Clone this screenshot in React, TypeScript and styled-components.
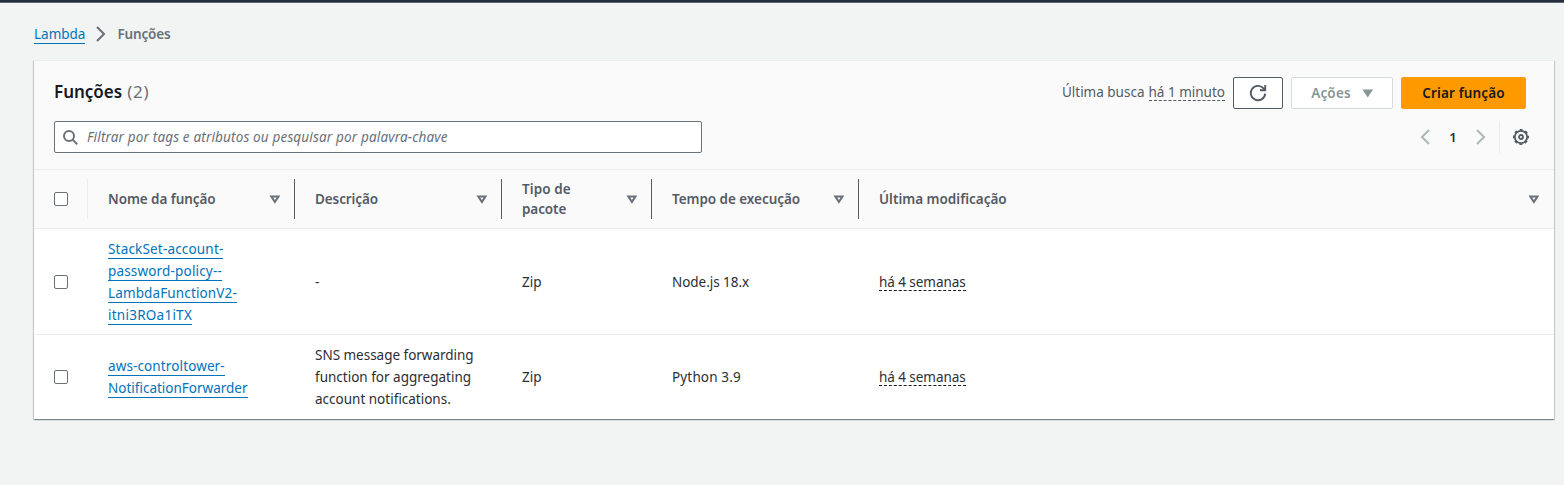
import React from "react";
import styled, { createGlobalStyle, css } from "styled-components";

const Global = createGlobalStyle`
  * { box-sizing: border-box; }
  body {
    margin: 0;
    background: #f2f3f3;
    color: #2b2e34;
    font: 13.5px/22px "Noto Sans", "Open Sans", sans-serif;
  }
  #root { min-height: 485px; }
`;

const TopBar = styled.div`
  height: 3px;
  background: #232f3e;
  border-bottom: 1px solid #5d6674;
`;

const Breadcrumbs = styled.nav`
  display: flex;
  align-items: center;
  height: 57px;
  padding: 5px 0 0 34px;
  svg { margin: 0 8px; }
`;

/* A run of text with its own tracking. */
const Text = styled.span<{ $track?: number }>`
  letter-spacing: ${(p) => p.$track ?? 0}px;
  white-space: nowrap;
`;

const Current = styled(Text)`
  color: #687078;
  font-weight: 600;
`;

const Link = styled.a<{ $track?: number }>`
  color: #0073bb;
  letter-spacing: ${(p) => p.$track ?? 0}px;
  white-space: nowrap;
  line-height: 19px;
  height: 19px;
  border-bottom: 1px solid #0073bb;
`;

const Panel = styled.main`
  margin: 0 10px 0 34px;
  background: #fff;
  border-top: 1px solid #eaeded;
  box-shadow: 0 1px 1px 0 rgba(0, 28, 36, 0.3), 1px 1px 1px 0 rgba(0, 28, 36, 0.15),
    -1px 1px 1px 0 rgba(0, 28, 36, 0.15);
`;

const PanelHeader = styled.header`
  height: 108px;
  padding: 16px 20px 0;
  background: #fafafa;
`;

const Line = styled.div`
  display: flex;
  align-items: center;
  justify-content: space-between;
  height: 32px;
  & + & { margin-top: 12px; }
`;

const Title = styled.h2`
  margin: 0;
  font-size: 17px;
  font-weight: 600;
  line-height: 22px;
  padding-bottom: 2px;
  color: #16191f;
`;

const Counter = styled.span`
  margin-left: 5px;
  color: #687078;
  font-weight: 400;
  letter-spacing: 0.7px;
`;

const Actions = styled.div`
  display: flex;
  align-items: center;
  gap: 8px;
  margin-right: 8px;
`;

const LastFetch = styled.div`
  display: flex;
  align-items: baseline;
  padding-bottom: 2px;
  color: #545b64;
  gap: 4px;
`;

const Relative = styled.span<{ $track?: number; $line?: string }>`
  display: inline-block;
  height: 19px;
  margin-bottom: 1px;
  line-height: 20px;
  white-space: nowrap;
  letter-spacing: ${(p) => p.$track ?? 0}px;
  border-bottom: 1px dashed ${(p) => p.$line ?? "#16191f"};
`;

const variants = {
  normal: css`background: #fff; border-color: #545b64; color: #545b64;`,
  disabled: css`background: #fff; border-color: #d5dbdb; color: #879596;`,
  primary: css`background: #ff9900; border-color: #ff9900; color: #16191f;`,
};

const Button = styled.button<{ $variant: keyof typeof variants; $width: number }>`
  display: flex;
  align-items: center;
  justify-content: center;
  gap: 11px;
  width: ${(p) => p.$width}px;
  height: 32px;
  padding: 0;
  border: 1px solid;
  border-radius: 2px;
  font: inherit;
  font-weight: 600;
  ${(p) => variants[p.$variant]}
`;

const Search = styled.label`
  display: flex;
  align-items: center;
  gap: 9px;
  width: 648px;
  height: 32px;
  padding-left: 8px;
  background: #fff;
  border: 1px solid #687078;
  border-radius: 2px;
  color: #687078;
  font-style: italic;
`;

const Pager = styled.div`
  display: flex;
  align-items: center;
  margin-right: 5px;
`;

const PageNumber = styled.span`
  width: 40px;
  text-align: center;
  font-weight: 600;
  font-size: 13px;
`;

const Settings = styled.div`
  display: flex;
  align-items: center;
  height: 32px;
  margin-left: 10px;
  padding: 0 0 0 13px;
  border-left: 1px solid #eaeded;
`;

const Row = styled.div<{ $height: number; $head?: boolean }>`
  display: grid;
  grid-template-columns: 54px 207px 207px 150px 207px 1fr;
  align-items: center;
  height: ${(p) => p.$height}px;
  border-top: 1px solid #eaeded;
  background: ${(p) => (p.$head ? "#fafafa" : "#fff")};
`;

const Cell = styled.div`
  display: flex;
  flex-direction: column;
  align-items: flex-start;
  padding-left: 20px;
`;

const Lines = styled(Cell)`
  align-self: start;
  gap: 3px;
  padding-top: 11px;
  ${Row}:last-child & { padding-top: 22px; }
`;

const HeadCell = styled.div<{ $divider?: string }>`
  display: flex;
  align-items: center;
  justify-content: space-between;
  height: 40px;
  padding: 0 14px 0 20px;
  border-right: 1px solid ${(p) => p.$divider ?? "#545b64"};
  color: #545b64;
  font-weight: 600;
  line-height: 20px;
  &:last-child { border-right: 0; padding-right: 15px; }
`;

const Box = styled.span`
  width: 14px;
  height: 14px;
  background: #fff;
  border: 1px solid #687078;
  border-radius: 2px;
`;

const Chevron = ({ flip, color }: { flip?: boolean; color: string }) => (
  <svg width="16" height="16" viewBox="0 0 16 16" fill="none" stroke={color} strokeWidth="2">
    <path d={flip ? "M12 1 5 8l7 7" : "M4 1l7 7-7 7"} />
  </svg>
);

const SortIcon = () => (
  <svg width="11" height="9" viewBox="0 0 11 9" fill="none" stroke="#687078" strokeWidth="2">
    <path d="M2.3 1.5h7.2L5.9 6.9z" />
  </svg>
);

const SearchIcon = () => (
  <svg width="15" height="15" viewBox="0 0 15 15" fill="none" stroke="#687078" strokeWidth="2">
    <circle cx="6" cy="6" r="5" />
    <path d="M9.6 9.6l4.6 4.6" />
  </svg>
);

const RefreshIcon = () => (
  <svg width="18" height="18" viewBox="0 0 18 18" fill="none" stroke="#545b64" strokeWidth="1.9">
    <path d="M16.2 9.6a7.2 7.2 0 1 1-1.7-5.2l1.3 1.4" />
    <path d="M16.2 1v5.2h-5.2" />
  </svg>
);

const GearIcon = () => (
  <svg width="16" height="16" viewBox="0 0 16 16" fill="none" stroke="#545b64">
    <circle cx="8" cy="8" r="6.2" strokeWidth="1.8" />
    <circle cx="8" cy="8" r="7.2" strokeWidth="1.6" strokeDasharray="3 2.655" strokeDashoffset="1.5" />
    <circle cx="8" cy="8" r="2" strokeWidth="1.8" />
  </svg>
);

const columns: [string, number][][] = [
  [["Nome da função", -0.07]],
  [["Descrição", -0.1]],
  [["Tipo de", 0.1], ["pacote", -0.1]],
  [["Tempo de execução", -0.05]],
  [["Última modificação", 0]],
];

const rows: {
  height: number;
  name: [string, number][];
  description: [string, number][];
  runtime: [string, number];
}[] = [
  {
    height: 106,
    name: [
      ["StackSet-account-", 0.18],
      ["password-policy--", 0.17],
      ["LambdaFunctionV2-", 0.13],
      ["itni3ROa1iTX", 0.25],
    ],
    description: [["-", 0]],
    runtime: ["Node.js 18.x", -0.04],
  },
  {
    height: 85,
    name: [
      ["aws-controltower-", 0.12],
      ["NotificationForwarder", 0],
    ],
    description: [
      ["SNS message forwarding", -0.02],
      ["function for aggregating", 0],
      ["account notifications.", 0],
    ],
    runtime: ["Python 3.9", 0.15],
  },
];

export default function App() {
  return (
    <>
      <Global />
      <TopBar />
      <Breadcrumbs>
        <Link>Lambda</Link>
        <Chevron color="#687078" />
        <Current $track={-0.15}>Funções</Current>
      </Breadcrumbs>
      <Panel>
        <PanelHeader>
          <Line>
            <Title>
              Funções<Counter>(2)</Counter>
            </Title>
            <Actions>
              <LastFetch>
                <Text>Última busca</Text>
                <Relative $line="#545b64">há 1 minuto</Relative>
              </LastFetch>
              <Button $variant="normal" $width={50}>
                <RefreshIcon />
              </Button>
              <Button $variant="disabled" $width={102}>
                <Text $track={0.2}>Ações</Text>
                <svg width="11" height="9" viewBox="0 0 11 9">
                  <path d="M.5 .5h10.5L5.75 8.5z" fill="#879596" />
                </svg>
              </Button>
              <Button $variant="primary" $width={125}>
                <Text $track={0.15}>Criar função</Text>
              </Button>
            </Actions>
          </Line>
          <Line>
            <Search>
              <SearchIcon />
              <Text $track={0.16}>Filtrar por tags e atributos ou pesquisar por palavra-chave</Text>
            </Search>
            <Pager>
              <Chevron flip color="#aab7b8" />
              <PageNumber>1</PageNumber>
              <Chevron color="#aab7b8" />
              <Settings>
                <GearIcon />
              </Settings>
            </Pager>
          </Line>
        </PanelHeader>
        <Row $height={59} $head>
          <HeadCell $divider="#eaeded">
            <Box />
          </HeadCell>
          {columns.map((label) => (
            <HeadCell key={label[0][0]}>
              <div>
                {label.map(([t, k]) => (
                  <div key={t}>
                    <Text $track={k}>{t}</Text>
                  </div>
                ))}
              </div>
              <SortIcon />
            </HeadCell>
          ))}
        </Row>
        {rows.map((r) => (
          <Row key={r.runtime[0]} $height={r.height}>
            <Cell>
              <Box />
            </Cell>
            <Lines>
              {r.name.map(([t, k]) => (
                <Link key={t} $track={k}>
                  {t}
                </Link>
              ))}
            </Lines>
            <Cell>
              {r.description.map(([t, k]) => (
                <Text key={t} $track={k}>
                  {t}
                </Text>
              ))}
            </Cell>
            <Cell>
              <Text>Zip</Text>
            </Cell>
            <Cell>
              <Text $track={r.runtime[1]}>{r.runtime[0]}</Text>
            </Cell>
            <Cell>
              <Relative $track={-0.06}>há 4 semanas</Relative>
            </Cell>
          </Row>
        ))}
      </Panel>
    </>
  );
}
